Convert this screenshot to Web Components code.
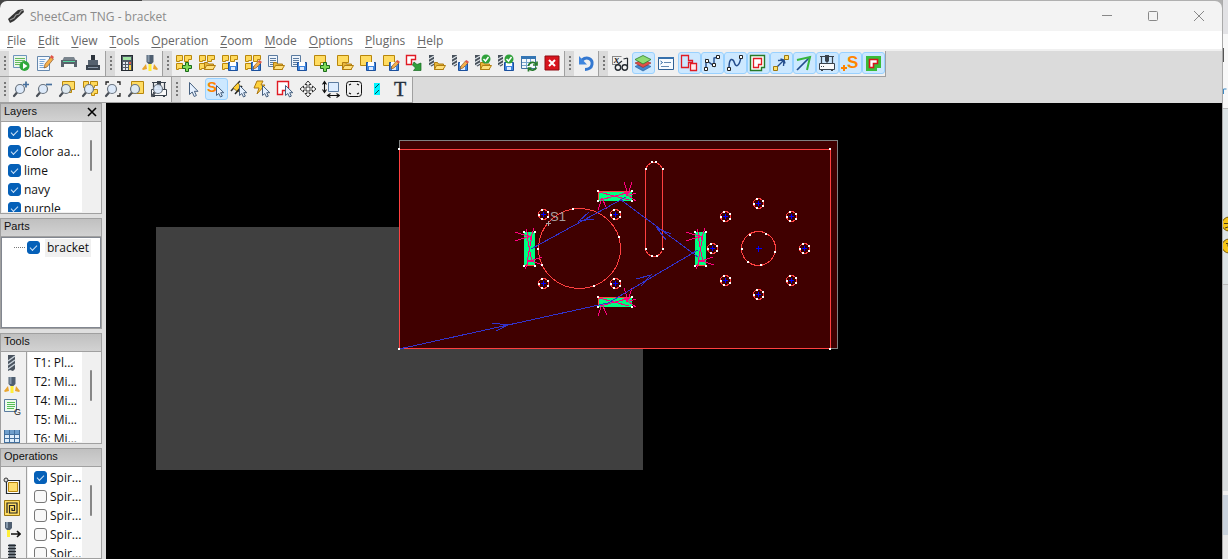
<!DOCTYPE html>
<html lang="en">
<head>
<meta charset="utf-8">
<title>SheetCam TNG - bracket</title>
<style>
html, body { margin: 0; height: 100%; overflow: hidden; }
body { font-family: "Open Sans", "Noto Sans", sans-serif; font-size: 12px; color: #111; }
</style>
</head>
<body>
<sheetcam-app></sheetcam-app>
<script>
/* Shared fragments that the toolbar icons are composed from (18 x 18 grid). */
const quad = '<g fill="#ffd95a" stroke="#b8860b"><path d="M1.5 1.5h6v5h-3v1h-3z"/><path d="M9.500 1.500h7v4h-3v2h-4z"/><path d="M1.500 9.500h6v5h-4v1h-2z"/></g>';
const quadFull = '<g fill="#ffd95a" stroke="#b8860b"><path d="M2.500 1.500h5v4h-2v2h-3z"/><path d="M9.500 1.500h7v4h-3v2h-4z"/><path d="M10.500 9.500h6v4h-3v2h-3z"/></g>';
const block = '<path d="M1.500 1.500h11v7h-5v3h-6z" fill="#ffdc62" stroke="#b8860b"/>';
const docs = '<g fill="#eef4fb" stroke="#5b7ba0"><path d="M1.500 1.500h9v11h-9z"/><path d="M3 4.500h6M3 6.500h6M3 8.500h5M3 10.500h4"/></g>';
const mill = '<path d="M1 1h5v10l-2.500 1.500L1 11z" fill="#48515b"/><path d="M1 5l5-3M1 8.500l5-3M1 12l5-3" stroke="#dfe5ea" stroke-width="1.200"/>';
const folder = '<g stroke="#b07d10" stroke-linejoin="round"><path d="M6.500 15.500v-7h3l1 1.500h5v5.500z" fill="#e8b73c"/><path d="M6.500 15.500l2-4h9l-2.500 4z" fill="#ffe07c"/></g>';
const floppy = '<path d="M7.500 8.500h9v8h-9z" fill="#3f86de" stroke="#1b4f9c"/><path d="M9 8h6v4H9z" fill="#fff"/><path d="M10 13h4v3h-4z" fill="#dceaff"/>';
const pencil = '<path d="M8 14l1-4 6-7 2.500 2L11 13z" fill="#f5b04b" stroke="#7a4a22" stroke-width=".6"/><path d="M14 3l1.500-2 2.500 2-1.500 2z" fill="#e0564a"/>';
const smallPencil = '<path d="M9 15l1-3 4.500-5L17 9l-5 5z" fill="#f5b04b" stroke="#7a4a22" stroke-width=".6"/><path d="M14 7.500L15.500 6 18 8l-1.500 1.500z" fill="#e0564a"/>';
const plus = '<path d="M10.500 8.500h3v3h3v3h-3v3h-3v-3h-3v-3h3z" fill="#7ed957" stroke="#1b6b1b"/>';
const tick = '<circle cx="12" cy="5" r="4.500" fill="#2fa13a"/><path d="M9.500 5l2 2 3-4" fill="none" stroke="#fff" stroke-width="1.500"/>';
const lens = '<path d="M5 12.500L2 16" stroke="#4a5058" stroke-width="2.200" stroke-linecap="round"/><circle cx="8" cy="9" r="4.500" fill="#dbeafb" fill-opacity=".93" stroke="#6b7580" stroke-width="1.200"/>';
const cursor = '<path d="M9.500 5.500v10l2.300-2 1.700 3.500 1.800-.9-1.600-3.400h3.100z" fill="#e6f1ff" stroke="#46607f"/>';
const machine = '<path d="M2 2.500h14M3.500 2.500v7M14.500 2.500v7" stroke="#39424c" stroke-width="1.200"/><path d="M7 1h4v6L9 9 7 7z" fill="#39424c"/><path d="M1.500 9.500h15v6h-15z" fill="#fafafa" stroke="#39424c"/><path d="M3 12.500h1M5 12.500h1" stroke="#39424c"/><path d="M3 16.500h2M13 16.500h2" stroke="#39424c"/>';
const torch = '<path d="M5.500 1h7v7l-2 2h-3l-2-2z" fill="#4e5e70"/><path d="M6.500 1h2v7h-2z" fill="#8799ab"/><path d="M7.500 10h3v7h-3z" fill="#ffef38"/><path d="M5 10l-4 5 1 1 4-1zM13 10l4 5-1 1-4-1z" fill="#e9a52d"/>';
const node = (x, y) => `<path d="M${x - 1.5} ${y - 1.5}h3v3h-3z" fill="#fff" stroke="#222"/>`;

const ICONS = {
  run: '<path d="M1.500 1.500h13v12h-13z" fill="#eaf6ea" stroke="#6d94bd"/><path d="M3 4.500h10M3 6.500h10M3 8.500h8M3 10.500h5" stroke="#63b95c"/><circle cx="12.500" cy="12" r="5" fill="#2ea83a"/><path d="M11 9v6l4.500-3z" fill="#fff"/>',
  edit: '<path d="M1.500 2.500h12v14h-12z" fill="#f3f8fd" stroke="#6688ad"/><path d="M3.500 5.500h6M3.500 7.500h5M3.500 9.500h4M3.500 11.500h4M3.500 13.500h6" stroke="#79a7d8"/>' + pencil,
  printer: '<path d="M4 3h10l2 4H2z" fill="#7b858e"/><path d="M1 6h16v7H1z" fill="#59636c"/><path d="M4 10h10v4H4z" fill="#f4f6f5"/><path d="M3 7.500h12" stroke="#58d6a0"/>',
  machine2: '<path d="M7 1h4v5H7z" fill="#2e353d"/><path d="M4 6h10v6H4z" fill="#55616e"/><path d="M2 11h14v5H2z" fill="#3b4550"/><path d="M4 13.500h10" stroke="#8795a5"/>',
  calc: '<rect x="3.500" y="1.500" width="11" height="15" fill="#515b66" stroke="#252b31"/><path d="M5 3h8v3H5z" fill="#9fe3a2"/><g fill="#e4e9ee"><path d="M5 8h2v2H5zM8 8h2v2H8zM5 11h2v2H5zM8 11h2v2H8zM5 14h2v2H5zM8 14h2v2H8z"/></g><path d="M11 8h2v2h-2z" fill="#e25b4a"/><path d="M11 11h2v5h-2z" fill="#ffd23d"/>',
  torch,
  quadPlus: quad + plus, quadOpen: quad + folder, quadSave: quad + floppy, quadEdit: quad + floppy + smallPencil,
  docOpen: docs + folder, docSave: docs + floppy,
  partPlus: block + plus, partOpen: block + folder, partSave: block + floppy, partEdit: block + floppy + smallPencil,
  partImport: '<path d="M1.500 1.500h9v4h-4v5h-5z" fill="#fff" stroke="#e01b24" stroke-width="1.400"/><path d="M9 8l3 2.500 4-1.500v7.500H8.500l2-2.500L7.500 11z" fill="#2fa13a" stroke="#16661e" stroke-width=".7"/>',
  millOpen: mill + folder, millEdit: mill + floppy + smallPencil, millCheck: mill + folder + tick, millSaveCheck: mill + floppy + tick,
  refresh: '<path d="M1.500 2.500h14v12h-14z" fill="#f4f8fc" stroke="#42719f"/><path d="M1 2h15v3H1z" fill="#3576b4"/><path d="M2 8.500h13M2 11.500h6M6.500 5v9M10.500 5v3" stroke="#77a5cd"/><path d="M8.500 12c.5-4 6-5 8-1.500M17 7.500V11h-4M16.500 13.500c-1.500 3-5.500 3.500-7.500 1M8.500 17.500V14h3" fill="none" stroke="#267a2c" stroke-width="1.700"/>',
  close: '<path d="M2 2h14v14H2z" fill="#d8141d" stroke="#8e0c12"/><path d="M6 6l6 6M12 6l-6 6" stroke="#fff" stroke-width="2"/>',
  undo: '<path d="M5 6c5-4 11-1 10 4.500C14.500 14 11 15.500 8 15.500" fill="none" stroke="#3478d0" stroke-width="3"/><path d="M2 2v8.500h8z" fill="#3f86de"/>',
  glasses: '<path d="M1.500 2.500h9M1.500 10.500h4M1.500 2v9" stroke="#888"/><text x="3" y="9" font-family="Liberation Serif" font-style="italic" font-weight="bold" font-size="10" fill="#222">x</text><path d="M6 11l5-4M16.500 4v9M12.500 5l4-1" stroke="#252b31" stroke-width="1.200"/><circle cx="7" cy="13.500" r="2.700" fill="#f4f4f4" stroke="#252b31" stroke-width="1.400"/><circle cx="13.800" cy="13.500" r="2.700" fill="#f4f4f4" stroke="#252b31" stroke-width="1.400"/>',
  layers: '<path d="M1 12.500l8-3.500 8 3.500L9 17z" fill="#4386cc" stroke="#235b96" stroke-width=".6"/><path d="M1 9l8-3.500L17 9l-8 4.500z" fill="#df4f49" stroke="#9b231f" stroke-width=".6"/><path d="M1 5.500L9 1.500l8 4L9 10z" fill="#8edb72" stroke="#2b7d28" stroke-width=".8"/>',
  form: '<path d="M1.500 3.500h15v12h-15z" fill="#f7fbff" stroke="#2f6095"/><path d="M1 3h16v2H1z" fill="#3771ac"/><path d="M3.500 7l2 1.500-2 1.500" fill="none" stroke="#245f9d"/><path d="M7 8.500h7M4 12.500h8" stroke="#6288b0"/>',
  outline: '<path d="M1.500 1.500h7v5h4v2h-4v5h-7z" fill="none" stroke="#e01b24" stroke-width="1.300"/><path d="M10.500 9.500h6v7h-6z" fill="#ffeceb" stroke="#e01b24" stroke-width="1.300"/>',
  polyline: '<path d="M3 15V6l8 6V4l4-1" fill="none" stroke="#234c8c" stroke-width="1.400"/>' + node(3, 15) + node(4, 7) + node(11, 11) + node(15, 3),
  curve: '<path d="M3 14C3 3 7 4 8.500 9s5 3 6.500-6" fill="none" stroke="#234c8c" stroke-width="1.500"/>' + node(3, 15) + node(15, 3),
  region: '<path d="M1.500 1.500h14v12h-3v3h-11z" fill="#f8fff4" stroke="#257a28" stroke-width="1.400"/><path d="M4.500 4.500h8v6h-3v3h-5z" fill="#fff" stroke="#e01b24" stroke-width="1.300"/>',
  rapid: '<path d="M4 14L14 4M6 6.500l6-.5-.5 6M8.500 5L12 6l1 3.500" fill="none" stroke="#234c8c" stroke-width="1.400"/><g fill="#ffe06a" stroke="#9c7810"><path d="M1.500 12.500h4v4h-4zM12.500 1.500h4v4h-4z"/></g>',
  direction: '<path d="M2 16L15 3" stroke="#234c8c" stroke-width="1.700"/><path d="M2 6l13-3-3 13" fill="none" stroke="#36b53c" stroke-width="2"/>',
  machine,
  start: '<path d="M0 14h6M3 11v6" stroke="#ff8500" stroke-width="2"/><text x="6" y="14" font-family="Liberation Sans" font-weight="bold" font-size="17" fill="#ff8500">S</text>',
  cut: '<path d="M4 4h11v8h-4v3H4z" fill="#fff" stroke="#39bd39" stroke-width="4"/><path d="M5.500 5.500h8v4h-4v4h-4z" fill="#fff" stroke="#d8141d" stroke-width="1.600"/>',

  zoomIn: lens + '<path d="M14 1.500v6M11 4.500h6" stroke="#466f9d" stroke-width="1.700"/>',
  zoomOut: lens + '<path d="M11 4.500h6" stroke="#466f9d" stroke-width="1.700"/>',
  zoomPart: '<path d="M4.500 1.500h12v8h-3v3h-9z" fill="#ffdc62" stroke="#b8860b"/>' + lens,
  zoomParts: quadFull + lens,
  zoomFit: '<path d="M2 5V2h3M13 2h3v3M16 13v3h-3" fill="none" stroke="#222" stroke-width="1.300"/>' + lens,
  zoomSheet: '<path d="M4.500 1.500h12v12h-12z" fill="#ffdc62" stroke="#b8860b"/>' + lens,
  zoomMachine: machine + lens,
  arrow: '<path d="M5.500 2.500v12l2.700-2.500 2 4.500 2.200-1-2-4.200h3.600z" fill="#e6f1ff" stroke="#46607f"/>',
  pickStart: '<text x="0" y="12" font-family="Liberation Sans" font-weight="bold" font-size="15" fill="#ff8500">S</text>' + cursor,
  pickTab: '<path d="M1 11L10 1" stroke="#333" stroke-width="1.500"/><path d="M3 8l5-5 4 5-4 4z" fill="#ffce36" stroke="#6b5410" stroke-width=".7"/><path d="M5 14l7-8" stroke="#222" stroke-width="1.500"/>' + cursor,
  pickBolt: '<path d="M4 1h6L8 5h4l-8 9 2-6H1z" fill="#ffd23d" stroke="#ad7812"/>' + cursor,
  pickContour: '<path d="M1.500 1.500h11v9h-6v4h-5z" fill="#fff" stroke="#e01b24" stroke-width="1.400"/>' + cursor,
  move: '<path d="M9 1l3 3.500h-2V8h3.500V6L17 9l-3.500 3v-2H10v3.500h2L9 17l-3-3.500h2V10H4.500v2L1 9l3.500-3v2H8V4.500H6z" fill="#fff" stroke="#222" stroke-width=".9"/>',
  measure: '<path d="M6.500 2.500h10v9h-10z" fill="#dcecff" stroke="#5b7ba0"/><path d="M2.500 2v10M.500 4.500l2-3 2 3M.500 9.500l2 3 2-3M6 15.500h11M8.500 13.500l-3 2 3 2M14.500 13.500l3 2-3 2" fill="none" stroke="#111" stroke-width="1.100"/>',
  nest: '<rect x="1.500" y="1.500" width="15" height="15" rx="3" fill="none" stroke="#111"/><path d="M4 5l2-1M14 5l-2-1M4 13l2 1M14 13l-2 1" stroke="#111" stroke-width="1.200"/>',
  fill: '<path d="M6 3h6v12H6z" fill="#00f4ff"/><path d="M7 8l4-4M7 14l4-4" stroke="#064d55"/>',
  text: '<text x="3" y="16" font-family="Liberation Serif" font-size="20" fill="#27313c" stroke="#27313c" stroke-width=".4">T</text>',

  endmill: '<path d="M5 1h7v14l-2 2-3-1-2 1z" fill="#4a535e"/><path d="M5 7l7-5M5 11l7-5M5 15l7-5" stroke="#c9d2da" stroke-width="1.500"/>',
  gcode: '<path d="M1.500 1.500h12v12h-12z" fill="#edfaed" stroke="#5b7ba0"/><path d="M4 4.500h8M4 6.500h8M4 8.500h8M4 10.500h7" stroke="#55c054"/><text x="11" y="17" font-family="Liberation Sans" font-size="9" fill="#222">G</text>',
  table: '<path d="M1 2h16v15H1z" fill="#dfeefb"/><path d="M1 2h16v4H1z" fill="#6f9fcc"/><path d="M1.500 2v15M6.500 2v15M11.500 2v15M16.500 2v15M1 6.500h16M1 10.500h16M1 14.500h16" stroke="#426f9d"/>',
  offset: '<path d="M3.500 3.500h13v13h-13z" fill="#fff" stroke="#242a30" stroke-width="1.200"/><path d="M5.500 5.500h9v9h-9z" fill="#ffdf70" stroke="#b8860b"/><circle cx="3" cy="3" r="2" fill="#ddd" stroke="#333"/>',
  pocket: '<path d="M1.500 1.500h15v15h-15z" fill="#ffdc62" stroke="#9c7810"/><path d="M4 14V4h10v10H6.500V6.500h5v5H9V9" fill="none" stroke="#222" stroke-width="1.200"/>',
  jet: '<path d="M2 1h7v6l-2 2H4L2 7z" fill="#4e5e70"/><path d="M3 1h2v6H3z" fill="#8799ab"/><path d="M4 9h3v7H4z" fill="#ffef38"/><path d="M8 13h9M14 10l3 3-3 3" stroke="#111" stroke-width="1.600" fill="none"/>',
  tap: '<path d="M6 1h6v16H6z" fill="#8a949e"/><path d="M5 2.500h8M5 5.500h8M5 8.500h8M5 11.500h8M5 14.500h8" stroke="#242a30" stroke-width="1.400"/>'
};

const define = (name, html) => customElements.define(name, class extends HTMLElement {
  connectedCallback() {
    if (this.shadowRoot) return;
    this.attachShadow({ mode: 'open' }).innerHTML = typeof html === 'function' ? html(this) : html;
  }
});

/* One icon, by name. */
define('sc-icon', el => `<style>:host{display:block;width:18px;height:18px;flex:none}svg{display:block}</style>
<svg width="18" height="18" viewBox="0 0 18 18" aria-hidden="true" fill="none">${ICONS[el.getAttribute('name')] || ''}</svg>`);

/* Toolbar section: a grip, then one button per name; "*" marks a pressed toggle. */
define('tool-group', el => `<style>
:host{display:flex;height:25px;background:#f0f0f0;border-right:1px solid #a0a0a0;border-bottom:1px solid #a0a0a0}
.grip{width:9px;margin-right:1px;background:#dadada;display:grid;place-items:center}
.grip i{width:2px;height:15px;background:repeating-linear-gradient(#777 0 2px,transparent 2px 4px)}
.row{display:flex;padding-top:1px;gap:var(--tool-gap,0)}
button{width:23px;height:22px;padding:0 1px 0 0;border:1px solid transparent;border-radius:3px;background:none;display:grid;place-items:center}
button[aria-pressed=true]{background:#cce8ff;border-color:#99d1ff}
</style><span class="grip"><i></i></span><div class="row" role="toolbar">${el.getAttribute('tools').split(' ').map(t => {
  const on = t.endsWith('*'), n = t.replace('*', '');
  return `<button aria-label="${n}"${on ? ' aria-pressed="true"' : ''}><sc-icon name="${n}"></sc-icon></button>`;
}).join('')}</div>`);

define('title-bar', `<style>
:host{display:flex;align-items:center;height:30px;padding-left:8px;background:#f3f3f3;color:#8b8b8b;border-radius:7px 7px 0 0}
h1{font:inherit;margin:0 0 0 5px;flex:1}
button{width:46px;height:28px;border:0;padding:0;background:none;display:grid;place-items:center}
</style>
<svg width="17" height="17" viewBox="0 0 17 17"><path d="M0 11L10 2l5-1 1 3L6 13l-4 2-1-2z" fill="#333"/><path d="M2 12l4-2 2-3 3-1 2-3 2-1" fill="none" stroke="#999" stroke-width="1.200"/></svg>
<h1><slot></slot></h1>
<button aria-label="Minimize"><svg width="12" height="12"><path d="M1 5.500h10" stroke="#888"/></svg></button>
<button aria-label="Maximize"><svg width="12" height="12"><rect x="1.500" y="1.500" width="9" height="9" rx="1" fill="none" stroke="#888"/></svg></button>
<button aria-label="Close"><svg width="12" height="12"><path d="M1 1l10 10M11 1L1 11" stroke="#888"/></svg></button>`);

define('menu-bar', el => `<style>
:host{display:block;background:#fff;border-bottom:2px solid #f0f0f0;color:#666}
nav{display:flex;gap:12px;height:18px;padding-left:7px}
button{border:0;padding:0;background:none;font:inherit;color:inherit;line-height:20px}
u{text-underline-offset:2px}
</style><nav>${el.getAttribute('items').split(' ').map(t => `<button><u>${t[0]}</u>${t.slice(1)}</button>`).join('')}</nav>`);

/* Docked panel: caption, optional icon column, list and scroll thumb. */
define('dock-panel', el => `<style>
:host{display:flex;flex-direction:column;min-height:0;border:1px solid #a0a0a0;background:#f0f0f0;overflow:hidden;box-sizing:border-box}
header{display:flex;justify-content:space-between;align-items:flex-start;height:18px;flex:none;padding:0 3px;background:linear-gradient(#c0c0c0,#d2d2d2);border-bottom:1px solid #a0a0a0;box-sizing:border-box}
h2{font:11px/14px "Liberation Sans",Arial,sans-serif;margin:0}
header button{border:0;background:none;padding:2px 0 0;width:12px;height:14px}
header svg{display:block}
.body{flex:1;min-height:0;display:flex}
.side{width:23px;flex:none;padding:var(--side-top,2px) 0 0 2px;overflow:hidden;display:flex;flex-direction:column;gap:4px;border-right:1px solid #a0a0a0}
sc-icon[name=table]{margin-top:8px}
.list{flex:1;min-width:0;background:#fff;padding:1px 0 0 var(--indent,6px);overflow:hidden;margin:0 0 1px 1px}
.scroll{width:17px;flex:none;background:#f0f0f0;margin:1px 2px 1px 0;display:flex;justify-content:center}
.scroll i{width:2px;height:31px;margin-top:17px;background:#868686;border-radius:1px}
:host([tree]) .list{border:1px solid #828790;margin:0;padding-top:0}
</style><header><h2>${el.getAttribute('caption')}</h2>${el.hasAttribute('closable') ? '<button aria-label="Close panel"><svg width="12" height="12"><path d="M2 2l8 8M10 2l-8 8" stroke="#000" stroke-width="1.600"/></svg></button>' : ''}</header>
<div class="body">${el.hasAttribute('side') ? `<div class="side">${el.getAttribute('side').split(' ').map(n => `<sc-icon name="${n}"></sc-icon>`).join('')}</div>` : ''}
<div class="list"><slot></slot></div>${el.hasAttribute('tree') ? '' : '<div class="scroll"><i></i></div>'}</div>`);

/* List row; "check" gives it a tick box, "checked" ticks it. */
define('list-row', el => `<style>
:host{display:block}
label,div{display:flex;align-items:center;height:19px;white-space:nowrap;overflow:hidden}
input{appearance:none;box-sizing:border-box;width:13px;height:13px;margin:0 var(--check-gap,3px) 0 0;border:1px solid #777;border-radius:3px;background:#f8f8f8;flex:none;display:grid;place-items:center}
input:checked{background:#0560b8;border-color:#0560b8}
input:checked::before{content:"";width:6px;height:3px;border:solid #cfe3f7;border-width:0 0 1px 1px;transform:rotate(-45deg);margin-bottom:2px}
.stem{width:11px;border-top:1px dotted #777;margin:0 2px 0 12px}
:host([selected]) .t{background:#f0f0f0;padding:0 2px;line-height:18px}
</style>${el.hasAttribute('check')
  ? `<label>${el.hasAttribute('stem') ? '<i class="stem"></i>' : ''}<input type="checkbox"${el.hasAttribute('checked') ? ' checked' : ''}><span class="t"><slot></slot></span></label>`
  : '<div><span class="t"><slot></slot></span></div>'}`);

/* Drawing area: coordinates are those of the whole window. */
define('cam-canvas', () => {
  const sq = pts => pts.map(([x, y]) => `<path d="M${x - 1} ${y - 1}h2v2h-2z"/>`).join('');
  const holes = [[543.5, 214.5], [615.5, 214.5], [543.5, 283.5], [615.5, 283.5], [758.5, 203.5], [791.5, 216.5], [804.5, 248.5], [791.5, 280.5], [758.5, 294.5], [725.5, 280.5], [712.5, 248.5], [725.5, 216.5]];
  const hole = ([x, y]) => `<circle cx="${x}" cy="${y}" r="5" stroke="#ff4040"/><path d="M${x - 2.5} ${y}h5M${x} ${y - 2.5}v5" stroke="#0000ff"/><g fill="#fff">${sq([[x - 1.5, y - 4.5], [x + 4.5, y - 2.5], [x + 4.5, y + 2.5], [x - 1.5, y + 4.5], [x - 4.5, y + .5]])}</g>`;
  const tabH = (x, y) => `<g transform="translate(${x} ${y})"><path d="M0 0h34v10H0z" fill="#00ff80"/><path d="M0 .500h34M.500 0v10" stroke="#ff4040"/><path d="M1 1l30 8M2 9L32 1M4 7L0 19M4 7l5 11M30 3l-4-12M30 3l4-12M26 1l12 9M28 5l10-3" stroke="#ff0080"/><g fill="#fff">${sq([[0, 0], [34, 0], [0, 10], [34, 10]])}</g></g>`;
  const tabV = (x, y) => `<g transform="translate(${x} ${y})"><path d="M0 0h11v34H0z" fill="#00ff80"/><path d="M0 33.500h11" stroke="#ff4040"/><path d="M3 4l5 26M8 4L3 30M-9 0L7 5M-9 9L7 4M2-3l3 9M10-4L6 8M4 30l14-5M4 28l15 5M5 28L1 37" stroke="#ff0080"/><g fill="#fff">${sq([[0, 0], [11, 0], [0, 34], [11, 34]])}</g></g>`;
  return `<style>:host{display:block;background:#000;min-width:0;overflow:hidden}svg{display:block;width:100%;height:100%}</style>
<svg role="img" aria-label="bracket"><g transform="translate(-106 -103)" fill="none" shape-rendering="crispEdges">
<path d="M156 227h487v243H156z" fill="#404040"/>
<path d="M399.500 140.500h438v208h-438z" fill="#400000" stroke="#808080"/>
<path d="M399.500 149.500h431v199h-431z" stroke="#ff4040"/>
<ellipse cx="579.500" cy="248.500" rx="41" ry="40" stroke="#ff4040"/>
<rect x="645.500" y="162.500" width="17" height="94" rx="8.500" stroke="#ff4040"/>
<circle cx="758.500" cy="248.500" r="17" stroke="#ff4040"/>
<path d="M755.500 248.500h6M758.500 245.500v6" stroke="#0000ff"/>
${tabH(598, 191)}${tabH(598, 297)}${tabV(524, 232)}${tabV(695, 232)}
<path d="M399 349L608 303 698 250M698 257L621 200M626 197L531 249M492 323l16 2-12 6M636 279l15-4-10 11M671 234l-14-6 9 12M589 212l-10 9 15-2" stroke="#3333cc"/>
${holes.map(hole).join('')}
<path d="M546 223.500h5M548.500 221v5" stroke="#aaa"/>
<text x="550" y="221" font-family="Liberation Sans" font-size="13" fill="#a8a0a0">S1</text>
<g fill="#fff">${sq([[399, 149], [399, 349], [830, 149], [830, 349], [573, 209], [619, 237], [538, 249], [594, 286], [542, 265], [652, 162], [656, 162], [663, 169], [646, 169], [646, 249], [663, 249], [652, 256], [657, 256], [750, 235], [766, 234], [775, 252], [761, 265], [748, 262], [742, 249]])}</g>
</g></svg>`;
});

/* Sliver of the browser window that shows behind the application. */
define('back-window', `<style>
:host{display:block;overflow:hidden;background:#e2e2e5}
svg{display:block}
</style><svg width="6" height="559" aria-hidden="true"><path d="M0 34h6v74H0z" fill="#f8f8f8"/><path d="M0 108h6v176H0z" fill="#dce3e5"/><path d="M0 108.500h6M0 284.500h6" stroke="#bbb"/><path d="M0 285h6v206H0z" fill="#d8dcde"/><path d="M0 491h6v4H0z" fill="#f0f0f0"/><path d="M0 495h6v40H0z" fill="#c9d2dc"/><path d="M0 535h6v24H0z" fill="#e8e8e8"/><path d="M0 48h2v14H0z" fill="#555"/><path d="M1.500 94v-5h3" fill="none" stroke="#3d89c4"/><g fill="#f5c518" stroke="#7a5c08"><circle cx="7" cy="224" r="7"/><circle cx="7" cy="246" r="7"/></g><path d="M2 223.500h4M3 228l3-1M4 243.500h2v3" stroke="#4a3b10" fill="none"/><path d="M.500 0v559" stroke="#aaa"/></svg>`);

define('sheetcam-app', `<style>
:host{display:grid;grid-template-columns:minmax(0,1fr) 6px;height:100vh}
.window{display:flex;flex-direction:column;min-height:0;background:linear-gradient(90deg,#444 142px,#b0b0b0 142px);padding-top:1px}
.bars{background:#dbdbdb}
.bar{display:flex}
.first{--tool-gap:1px}
main{flex:1;min-height:0;display:grid;grid-template-columns:102px minmax(0,1fr);column-gap:4px;background:#dfdfdf}
aside{display:grid;grid-template-rows:repeat(4,minmax(0,1fr));row-gap:4px;min-height:0}
.parts{--indent:0px;--check-gap:5px}
.ops{--side-top:10px}
</style>
<div class="window">
<title-bar>SheetCam TNG - bracket</title-bar>
<menu-bar items="File Edit View Tools Operation Zoom Mode Options Plugins Help"></menu-bar>
<div class="bars">
<div class="bar">
<tool-group class="first" tools="run edit printer machine2"></tool-group>
<tool-group tools="calc torch"></tool-group>
<tool-group tools="quadPlus quadOpen quadSave quadEdit docOpen docSave partPlus partOpen partSave partEdit partImport millOpen millEdit millCheck millSaveCheck refresh close"></tool-group>
<tool-group tools="undo"></tool-group>
<tool-group tools="glasses layers* form outline* polyline* curve* region* rapid* direction* machine* start* cut*"></tool-group>
</div>
<div class="bar">
<tool-group tools="zoomIn zoomOut zoomPart zoomParts zoomFit zoomSheet zoomMachine"></tool-group>
<tool-group tools="arrow pickStart* pickTab pickBolt pickContour move measure nest fill text"></tool-group>
</div>
</div>
<main>
<aside>
<dock-panel caption="Layers" closable><list-row check checked>black</list-row><list-row check checked>Color aa...</list-row><list-row check checked>lime</list-row><list-row check checked>navy</list-row><list-row check checked>purple</list-row></dock-panel>
<dock-panel caption="Parts" tree class="parts"><list-row check checked stem selected>bracket</list-row></dock-panel>
<dock-panel caption="Tools" side="endmill torch gcode table"><list-row>T1: Pl...</list-row><list-row>T2: Mi...</list-row><list-row>T4: Mi...</list-row><list-row>T5: Mi...</list-row><list-row>T6: Mi...</list-row></dock-panel>
<dock-panel caption="Operations" class="ops" side="offset pocket jet tap"><list-row check checked>Spir...</list-row><list-row check>Spir...</list-row><list-row check>Spir...</list-row><list-row check>Spir...</list-row><list-row check>Spir...</list-row></dock-panel>
</aside>
<cam-canvas></cam-canvas>
</main>
</div>
<back-window></back-window>`);
</script>
</body>
</html>
